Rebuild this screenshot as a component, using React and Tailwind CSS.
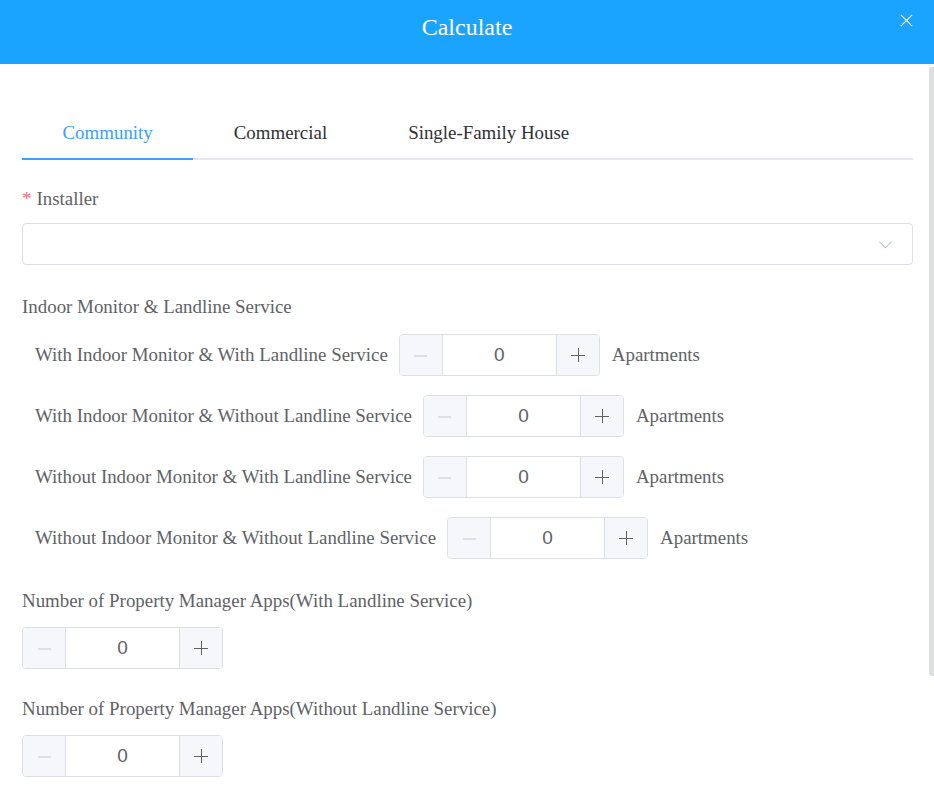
import React, { useState } from 'react';

const serif = { fontFamily: '"Liberation Serif", "Times New Roman", serif' };

function Counter({ value, onChange }) {
  return (
    <div className="flex h-[42px] w-[201px] rounded-[4px] border border-[#dcdfe6] overflow-hidden">
      <button
        onClick={() => onChange(Math.max(0, value - 1))}
        className="w-[43px] flex items-center justify-center bg-[#f5f7fa] border-r border-[#dcdfe6] text-[#c0c4cc]"
      >
        <svg viewBox="0 0 16 16" className="w-[15px] h-[15px]" fill="none" stroke="currentColor" strokeWidth="1">
          <path d="M1 8.5h14" />
        </svg>
      </button>
      <div className="flex-1 flex items-center justify-center text-[19px] text-[#606266]" style={{ fontFamily: '"Liberation Sans", Arial, sans-serif' }}>
        {value}
      </div>
      <button
        onClick={() => onChange(value + 1)}
        className="w-[43px] flex items-center justify-center bg-[#f5f7fa] border-l border-[#dcdfe6] text-[#606266]"
      >
        <svg viewBox="0 0 16 16" className="w-[16px] h-[16px]" fill="none" stroke="currentColor" strokeWidth="1">
          <path d="M1 8.5h14M8.5 1v14" />
        </svg>
      </button>
    </div>
  );
}

const rows = [
  'With Indoor Monitor & With Landline Service',
  'With Indoor Monitor & Without Landline Service',
  'Without Indoor Monitor & With Landline Service',
  'Without Indoor Monitor & Without Landline Service',
];

const tabs = ['Community', 'Commercial', 'Single-Family House'];

export default function App() {
  const [tab, setTab] = useState(0);
  const [counts, setCounts] = useState([0, 0, 0, 0]);
  const [apps, setApps] = useState([0, 0]);

  return (
    <div className="relative w-[934px] h-[796px] overflow-hidden bg-white" style={serif}>
      {/* header */}
      <div className="relative h-[64px] bg-[#1aa3ff] flex items-center justify-center">
        <h1 className="text-[24px] text-white leading-none -mt-[10px]">Calculate</h1>
        <button className="absolute right-[20px] top-[13px] text-white">
          <svg viewBox="0 0 16 16" className="w-[15px] h-[15px]" fill="none" stroke="currentColor" strokeWidth="1.3">
            <path d="M2 2l12 12M14 2L2 14" />
          </svg>
        </button>
      </div>

      {/* scrollbar thumb */}
      <div className="absolute right-0 top-[67px] w-[5px] h-[609px] rounded-l-[3px] bg-[#dddee0]" />

      <div className="pl-[22px] pr-[21px] pt-[43px] text-[18.9px]">
        {/* tabs */}
        <div className="flex border-b-2 border-[#e4e7ed]">
          {tabs.map((t, i) => (
            <button
              key={t}
              onClick={() => setTab(i)}
              className={
                'relative h-[51px] pt-[2px] px-[40.5px] ' +
                (tab === i ? 'text-[#409eff]' : 'text-[#303133]')
              }
            >
              {t}
              {tab === i && <span className="absolute left-0 right-0 -bottom-[2px] h-[2px] bg-[#409eff]" />}
            </button>
          ))}
        </div>

        {/* installer */}
        <div className="mt-[27px] text-[#606266] leading-[24px]">
          <span className="text-[#f56c6c] mr-[5px]">*</span>Installer
        </div>
        <div className="mt-[12px] h-[42px] rounded-[4px] border border-[#dcdfe6] flex items-center justify-end pr-[19px]">
          <svg viewBox="0 0 16 16" className="w-[15px] h-[15px] text-[#c0c4cc]" fill="none" stroke="currentColor" strokeWidth="1.1">
            <path d="M1.5 5l6.5 6.5L14.5 5" />
          </svg>
        </div>

        {/* indoor monitor */}
        <div className="mt-[30px] text-[#606266] leading-[24px]">Indoor Monitor &amp; Landline Service</div>
        <div className="mt-[15px] pl-[13px] flex flex-col gap-[19px]">
          {rows.map((r, i) => (
            <div key={r} className="flex items-center text-[#606266]">
              <span className="mr-[11px]">{r}</span>
              <Counter
                value={counts[i]}
                onChange={v => setCounts(prev => prev.map((c, j) => (j === i ? v : c)))}
              />
              <span className="ml-[12px]">Apartments</span>
            </div>
          ))}
        </div>

        {/* property manager apps */}
        <div className="mt-[30px] text-[#606266] leading-[24px]">Number of Property Manager Apps(With Landline Service)</div>
        <div className="mt-[14px]">
          <Counter value={apps[0]} onChange={v => setApps([v, apps[1]])} />
        </div>
        <div className="mt-[28px] text-[#606266] leading-[24px]">Number of Property Manager Apps(Without Landline Service)</div>
        <div className="mt-[14px]">
          <Counter value={apps[1]} onChange={v => setApps([apps[0], v])} />
        </div>
      </div>
    </div>
  );
}
